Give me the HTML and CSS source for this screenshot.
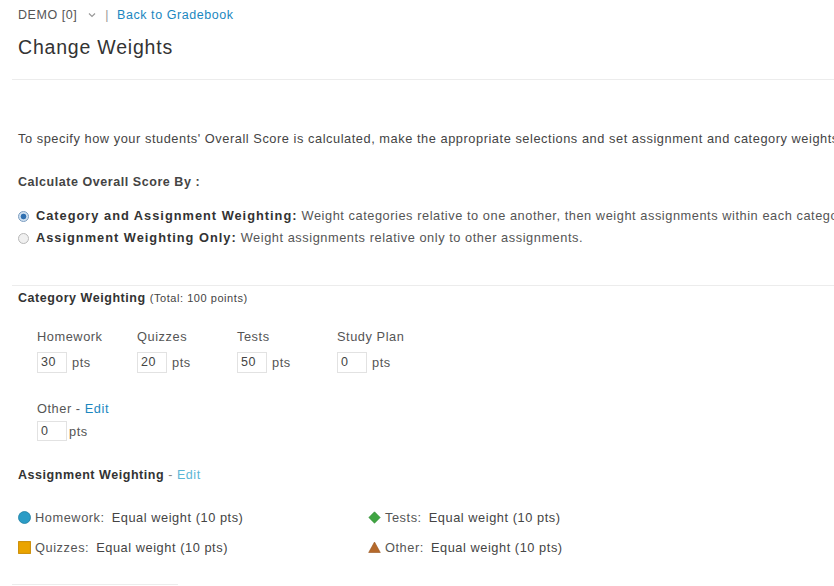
FILE: index.html
```html
<!DOCTYPE html>
<html>
<head>
<meta charset="utf-8">
<link rel="stylesheet" href="styles.css">
</head>
<body>
<div class="page">
  <div class="crumbs">
    <span class="course">DEMO [0]</span>
    <svg class="chev" width="8" height="6" viewBox="0 0 8 6"><path d="M1 1.5 L4 4.5 L7 1.5" fill="none" stroke="#999" stroke-width="1.2"/></svg>
    <span class="sep">|</span>
    <a class="link">Back to Gradebook</a>
  </div>
  <h1 class="title">Change Weights</h1>
  <div class="rule rule-top"></div>

  <p class="intro">To specify how your students' Overall Score is calculated, make the appropriate selections and set assignment and category weights below.</p>

  <div class="calc-label">Calculate Overall Score By :</div>
  <div class="radios">
    <div class="radio-row"><span class="radio checked"></span><b>Category and Assignment Weighting:</b> Weight categories relative to one another, then weight assignments within each category.</div>
    <div class="radio-row"><span class="radio"></span><b>Assignment Weighting Only:</b> Weight assignments relative only to other assignments.</div>
  </div>

  <div class="rule rule-mid"></div>

  <div class="sec-head"><b>Category Weighting</b> <span class="small">(Total: 100 points)</span></div>

  <div class="cats">
    <div class="cat">
      <div class="cat-label">Homework</div>
      <div class="cat-input"><span class="box">30</span><span class="pts">pts</span></div>
    </div>
    <div class="cat">
      <div class="cat-label">Quizzes</div>
      <div class="cat-input"><span class="box">20</span><span class="pts">pts</span></div>
    </div>
    <div class="cat">
      <div class="cat-label">Tests</div>
      <div class="cat-input"><span class="box">50</span><span class="pts">pts</span></div>
    </div>
    <div class="cat">
      <div class="cat-label">Study Plan</div>
      <div class="cat-input"><span class="box">0</span><span class="pts">pts</span></div>
    </div>
  </div>

  <div class="other">
    <div class="cat-label">Other - <a class="link">Edit</a></div>
    <div class="cat-input small-input"><span class="box">0</span><span class="pts">pts</span></div>
  </div>

  <div class="sec-head aw-head"><b>Assignment Weighting</b> <span class="dash">-</span> <a class="link light">Edit</a></div>

  <div class="aw-grid">
    <div class="aw-item"><svg class="ico" width="13" height="13" viewBox="0 0 13 13"><circle cx="6.5" cy="6.5" r="6" fill="#2b9cc6" stroke="#1d7fa3" stroke-width="0.8"/></svg><span class="aw-name">Homework:</span> Equal weight (10 pts)</div>
    <div class="aw-item"><svg class="ico" width="13" height="13" viewBox="0 0 13 13"><path d="M6.5 0.8 L12.2 6.5 L6.5 12.2 L0.8 6.5 Z" fill="#3fa542" stroke="#2e8a33" stroke-width="0.6"/></svg><span class="aw-name">Tests:</span> Equal weight (10 pts)</div>
    <div class="aw-item"><svg class="ico" width="13" height="13" viewBox="0 0 13 13"><rect x="0.6" y="0.6" width="11.8" height="11.8" fill="#eaa400" stroke="#c98a00" stroke-width="1"/></svg><span class="aw-name">Quizzes:</span> Equal weight (10 pts)</div>
    <div class="aw-item"><svg class="ico" width="13" height="13" viewBox="0 0 13 13"><path d="M6.5 1 L12.3 11.5 L0.7 11.5 Z" fill="#b5692b" stroke="#99561f" stroke-width="0.6"/></svg><span class="aw-name">Other:</span> Equal weight (10 pts)</div>
  </div>

  <div class="rule rule-bottom"></div>
</div>
</body>
</html>
```

FILE: styles.css
```css
html, body {
  margin: 0;
  padding: 0;
  background: #ffffff;
}

body {
  font-family: "Liberation Sans", Arial, sans-serif;
  color: #444;
  font-size: 13px;
  letter-spacing: 0.55px;
  overflow: hidden;
}

.page {
  width: 834px;
  white-space: nowrap;
}

.link {
  color: #1b87c0;
  text-decoration: none;
}

.link.light {
  color: #5bb6d6;
}

.crumbs {
  height: 30px;
  line-height: 30px;
  padding-left: 18px;
  font-size: 12.5px;
  color: #555;
  display: flex;
  align-items: center;
}

.chev {
  margin-left: 11px;
}

.sep {
  margin-left: 9px;
  margin-right: 8px;
  color: #999;
}

.title {
  margin: 0;
  padding-left: 18px;
  font-size: 19.5px;
  font-weight: normal;
  line-height: 34px;
  letter-spacing: 0.8px;
  color: #333;
}

.rule {
  height: 0;
  border-top: 1px solid #ececec;
  margin-left: 12px;
}

.rule-top {
  margin-top: 15px;
}

.intro {
  margin: 50px 0 0 0;
  padding-left: 18px;
  line-height: 18px;
  font-size: 12.8px;
  color: #444;
}

.calc-label {
  margin-top: 25px;
  padding-left: 18px;
  line-height: 18px;
  font-size: 12.5px;
  font-weight: bold;
  color: #444;
}

.radios {
  margin-top: 14px;
  padding-left: 18px;
}

.radio-row {
  display: flex;
  align-items: center;
  line-height: 22px;
  height: 22px;
  font-size: 12.8px;
  color: #555;
}

.radio-row b {
  color: #333;
  margin-right: 4px;
  letter-spacing: 1px;
}

.radio {
  width: 9px;
  height: 9px;
  border-radius: 50%;
  border: 1px solid #b8b8b8;
  background: #f0f0f0;
  margin-right: 7px;
  flex: none;
  box-sizing: content-box;
}

.radio.checked {
  background: radial-gradient(circle, #2f6fb0 0 2.5px, #cfe0f0 3.2px);
  border-color: #7a9cc0;
}

.rule-mid {
  margin-top: 36px;
}

.sec-head {
  margin-top: 3px;
  padding-left: 18px;
  line-height: 18px;
  font-size: 12.5px;
  color: #333;
}

.sec-head b {
  font-weight: bold;
}

.small {
  font-size: 11px;
  color: #444;
}

.cats {
  display: flex;
  margin-top: 21px;
  padding-left: 37px;
}

.cat {
  width: 100px;
}

.cat-label {
  line-height: 18px;
  font-size: 12.8px;
  color: #555;
}

.cat-input {
  margin-top: 6px;
  display: flex;
  align-items: center;
  height: 21px;
}

.box {
  width: 30px;
  height: 21px;
  box-sizing: border-box;
  border: 1px solid #e2e2e2;
  padding-left: 3px;
  line-height: 19px;
  font-size: 12.5px;
  color: #444;
}

.pts {
  margin-left: 5px;
  font-size: 12.8px;
  color: #555;
}

.other {
  margin-top: 27px;
  padding-left: 37px;
}

.small-input {
  margin-top: 3px;
  height: 20px;
}

.small-input .box {
  height: 20px;
  line-height: 18px;
}

.small-input .pts {
  margin-left: 2px;
}

.aw-head {
  margin-top: 25px;
}

.dash {
  color: #888;
}

.aw-grid {
  display: grid;
  grid-template-columns: 350px 300px;
  row-gap: 10px;
  margin-top: 23px;
  padding-left: 18px;
}

.aw-item {
  display: flex;
  align-items: center;
  height: 20px;
  font-size: 12.8px;
  color: #444;
}

.aw-item .ico {
  margin-right: 4px;
  flex: none;
}

.aw-name {
  color: #555;
  margin-right: 7px;
}

.rule-bottom {
  margin-top: 27px;
  width: 166px;
}
```
